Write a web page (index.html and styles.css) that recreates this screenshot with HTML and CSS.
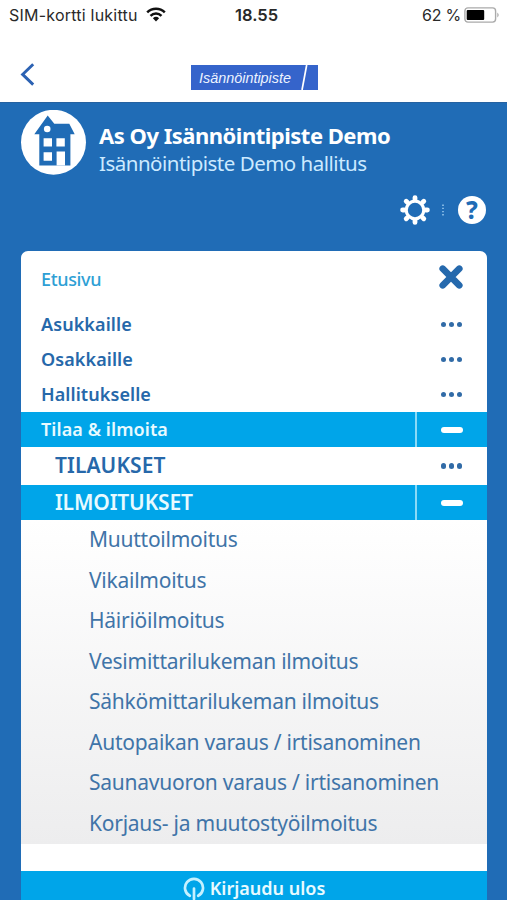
FILE: index.html
```html
<!DOCTYPE html>
<html lang="fi">
<head>
<meta charset="utf-8">
<title>Isännöintipiste</title>
<link rel="stylesheet" href="styles.css">
</head>
<body>
<div class="status">
  <span class="carrier">SIM-kortti lukittu</span>
  <svg class="wifi" width="20" height="15" viewBox="0 0 20 15"><g fill="none" stroke="#111" stroke-width="2.5"><path d="M1.2 5.4a12.6 12.6 0 0 1 17.6 0"/><path d="M4.5 8.8a7.9 7.9 0 0 1 11 0"/></g><path d="M6.9 11.2a4.5 4.5 0 0 1 6.2 0L10 14.4z" fill="#111"/></svg>
  <span class="clock">18.55</span>
  <span class="charge">62 %</span>
  <svg class="battery" width="36" height="16" viewBox="0 0 36 16"><rect x=".9" y=".9" width="30.7" height="14.2" rx="3" fill="#fff" stroke="#aaa" stroke-width="1.4"/><rect x="2.7" y="2.9" width="17.5" height="10.2" rx="1" fill="#000"/><path d="M33.5 5.5q2 2.5 0 5z" fill="#888"/></svg>
</div>
<nav class="navbar">
  <svg class="back" width="16" height="24" viewBox="0 0 16 24"><path d="M13.2 1.2 2.6 11.4l10.6 10.2" fill="none" stroke="#2c62b3" stroke-width="2.9"/></svg>
  <div class="brand"><span class="brand-text">Isännöintipiste</span><svg width="8" height="25" viewBox="0 0 8 25"><path d="M6.7 0 2 25" stroke="#fff" stroke-width="1.7"/></svg></div>
</nav>
<main class="page">
  <header class="head">
    <svg class="house" width="66" height="66" viewBox="0 0 66 66"><circle cx="32.5" cy="32.3" r="32.5" fill="#fff"/><path fill="#206cb6" d="M13.3 24.3 26.7 5.500l6.600 8.200h15l5.400 10.600h-4.300v31.100H18.300V24.300z"/><circle cx="26.200" cy="19" r="3.300" fill="#fff"/><path d="M22.600 28.200h8.400v8.400h-8.400zM35.400 28.200h8.400v8.400h-8.400zM22.600 42.300h8.400v8.400h-8.400zM35.600 41.500H44v14h-8.400z" fill="#fff"/></svg>
    <div class="names"><h1 class="title">As Oy Isännöintipiste Demo</h1><p class="sub">Isännöintipiste Demo hallitus</p></div>
  </header>
  <div class="tools">
    <svg width="30" height="30" viewBox="-15 -15 30 30"><circle r="8.800" fill="none" stroke="#fff" stroke-width="3.200"/><g stroke="#fff" stroke-width="4.800" stroke-linecap="round"><path d="M0-10.500v-1.900M0 10.500v1.900M-10.500 0h-1.900M10.500 0h1.900M7.600-7.600l1.200-1.200M-7.600-7.600l-1.200-1.200M7.600 7.600l1.200 1.200M-7.600 7.600l-1.200 1.200"/></g></svg>
    <svg class="sep" width="2" height="12" viewBox="0 0 2 12"><path d="M1 .5V12" stroke="#a5d2f4" stroke-width="1.400" stroke-dasharray="1.400 1.800"/></svg>
    <span class="help">?</span>
  </div>
  <section class="card">
    <div class="row home"><span class="label">Etusivu</span><span class="act close"><svg width="24" height="24" viewBox="0 0 24 24"><path d="m3.700 3.700 16.600 16.600M20.300 3.700 3.700 20.300" stroke="#2569ad" stroke-width="6.600" stroke-linecap="round"/></svg></span></div>
    <div class="row"><span class="label">Asukkaille</span><span class="act dots"><i></i><i></i><i></i></span></div>
    <div class="row"><span class="label">Osakkaille</span><span class="act dots"><i></i><i></i><i></i></span></div>
    <div class="row"><span class="label">Hallitukselle</span><span class="act dots"><i></i><i></i><i></i></span></div>
    <div class="row open"><span class="label">Tilaa &amp; ilmoita</span><span class="act"><b></b></span></div>
    <div class="row second orders"><span class="label">TILAUKSET</span><span class="act dots"><i></i><i></i><i></i></span></div>
    <div class="row second open"><span class="label tight">ILMOITUKSET</span><span class="act"><b></b></span></div>
    <ul class="list">
      <li>Muuttoilmoitus</li>
      <li>Vikailmoitus</li>
      <li>Häiriöilmoitus</li>
      <li>Vesimittarilukeman ilmoitus</li>
      <li>Sähkömittarilukeman ilmoitus</li>
      <li>Autopaikan varaus / irtisanominen</li>
      <li>Saunavuoron varaus / irtisanominen</li>
      <li>Korjaus- ja muutostyöilmoitus</li>
    </ul>
    <div class="logout"><svg width="22" height="24" viewBox="0 0 22 24"><path d="M6.800 18.800A9 9 0 1 1 15.200 18.800M11 11.500V22" fill="none" stroke="#c5f1ff" stroke-width="2.700" stroke-linecap="round"/></svg><span>Kirjaudu ulos</span></div>
  </section>
</main>
</body>
</html>
```
FILE: styles.css
```css
* { box-sizing: border-box; }
body { margin: 0; height: 900px; overflow: hidden; background: #fff; font-family: "Noto Sans", sans-serif; display: flex; flex-direction: column; }
svg { display: block; flex: none; }
.status { height: 30px; flex: none; display: flex; align-items: center; font: 16px/30px Inter, sans-serif; color: #292929; padding-left: 9px; white-space: nowrap; }
.carrier { width: 137px; letter-spacing: .22px; }
.wifi { margin-top: -2px; }
.clock { width: 44px; margin-left: 69px; font-size: 16.5px; font-weight: 600; }
.charge { width: 38px; margin-left: 143px; letter-spacing: -.2px; }
.battery { margin-left: 4px; }
.navbar { height: 72px; flex: none; display: flex; padding-left: 20px; }
.back { margin-top: 33px; }
.brand { width: 127px; height: 25px; margin: 35px 0 0 155px; background: #3564cb; display: flex; align-items: center; }
.brand-text { width: 109px; padding-left: 8px; font: italic 14.4px/24px "Liberation Sans", sans-serif; color: #edf3ff; white-space: nowrap; }
.page { flex: none; height: 798px; background: #206cb6; border-top: 1px solid #2562a1; padding: 7px 20px 0 21px; }
.head { display: flex; height: 66px; }
.names { margin: 11px 0 0 12px; white-space: nowrap; }
.title, .sub { margin: 0; font-size: 22px; line-height: 28px; }
.title { color: #fff; font-weight: 700; letter-spacing: -.5px; }
.sub { color: #cceaff; font-size: 20.5px; font-weight: 400; letter-spacing: -.5px; }
.tools { height: 30px; margin: 19px 0 0 379px; display: flex; align-items: center; }
.sep { margin: 0 14px 0 12px; }
.help { width: 28px; height: 28px; border-radius: 50%; background: #fff; color: #206cb6; font: 800 24px/28px "Noto Sans", sans-serif; text-align: center; }
.card { height: 650px; margin-top: 26px; background: #fff; border-radius: 7px 7px 0 0; }
.row { display: flex; height: 35px; align-items: center; padding-left: 20px; color: #2668aa; font-size: 18px; font-weight: 600; letter-spacing: .08px; }
.label { flex: 1; white-space: nowrap; margin-top: -1px; }
.act { width: 71px; height: 100%; display: flex; align-items: center; justify-content: center; }
.home { height: 56px; color: #2e9fd5; font-weight: 500; letter-spacing: -.35px; }
.close { padding: 0 2px 4px 0; }
.dots { gap: 2.2px; }
.dots i { width: 5.8px; height: 5.8px; border-radius: 50%; background: #316ba7; }
.open { background: #00a5e9; color: #e8faff; }
.open .act { border-left: 2px solid #8adaf7; width: 72px; }
.open b { width: 22px; height: 6px; border-radius: 3px; background: #fff; }
.second { padding-left: 34px; font-size: 21px; }
.second .label { margin-top: -2px; }
.tight { letter-spacing: -.15px; }
.orders { height: 38px; }
.list { list-style: none; margin: 0; padding: 0 0 0 68px; height: 324px; background: linear-gradient(#fff, #ededee); color: #4074a8; font-size: 21px; letter-spacing: -.25px; }
.list li { height: 40.5px; line-height: 39px; white-space: nowrap; }
.logout { margin-top: 27px; height: 35px; background: #00a5e9; color: #e8faff; display: flex; justify-content: center; align-items: center; gap: 5px; font-size: 18px; font-weight: 600; }
.logout span { margin-top: -1px; }
```
